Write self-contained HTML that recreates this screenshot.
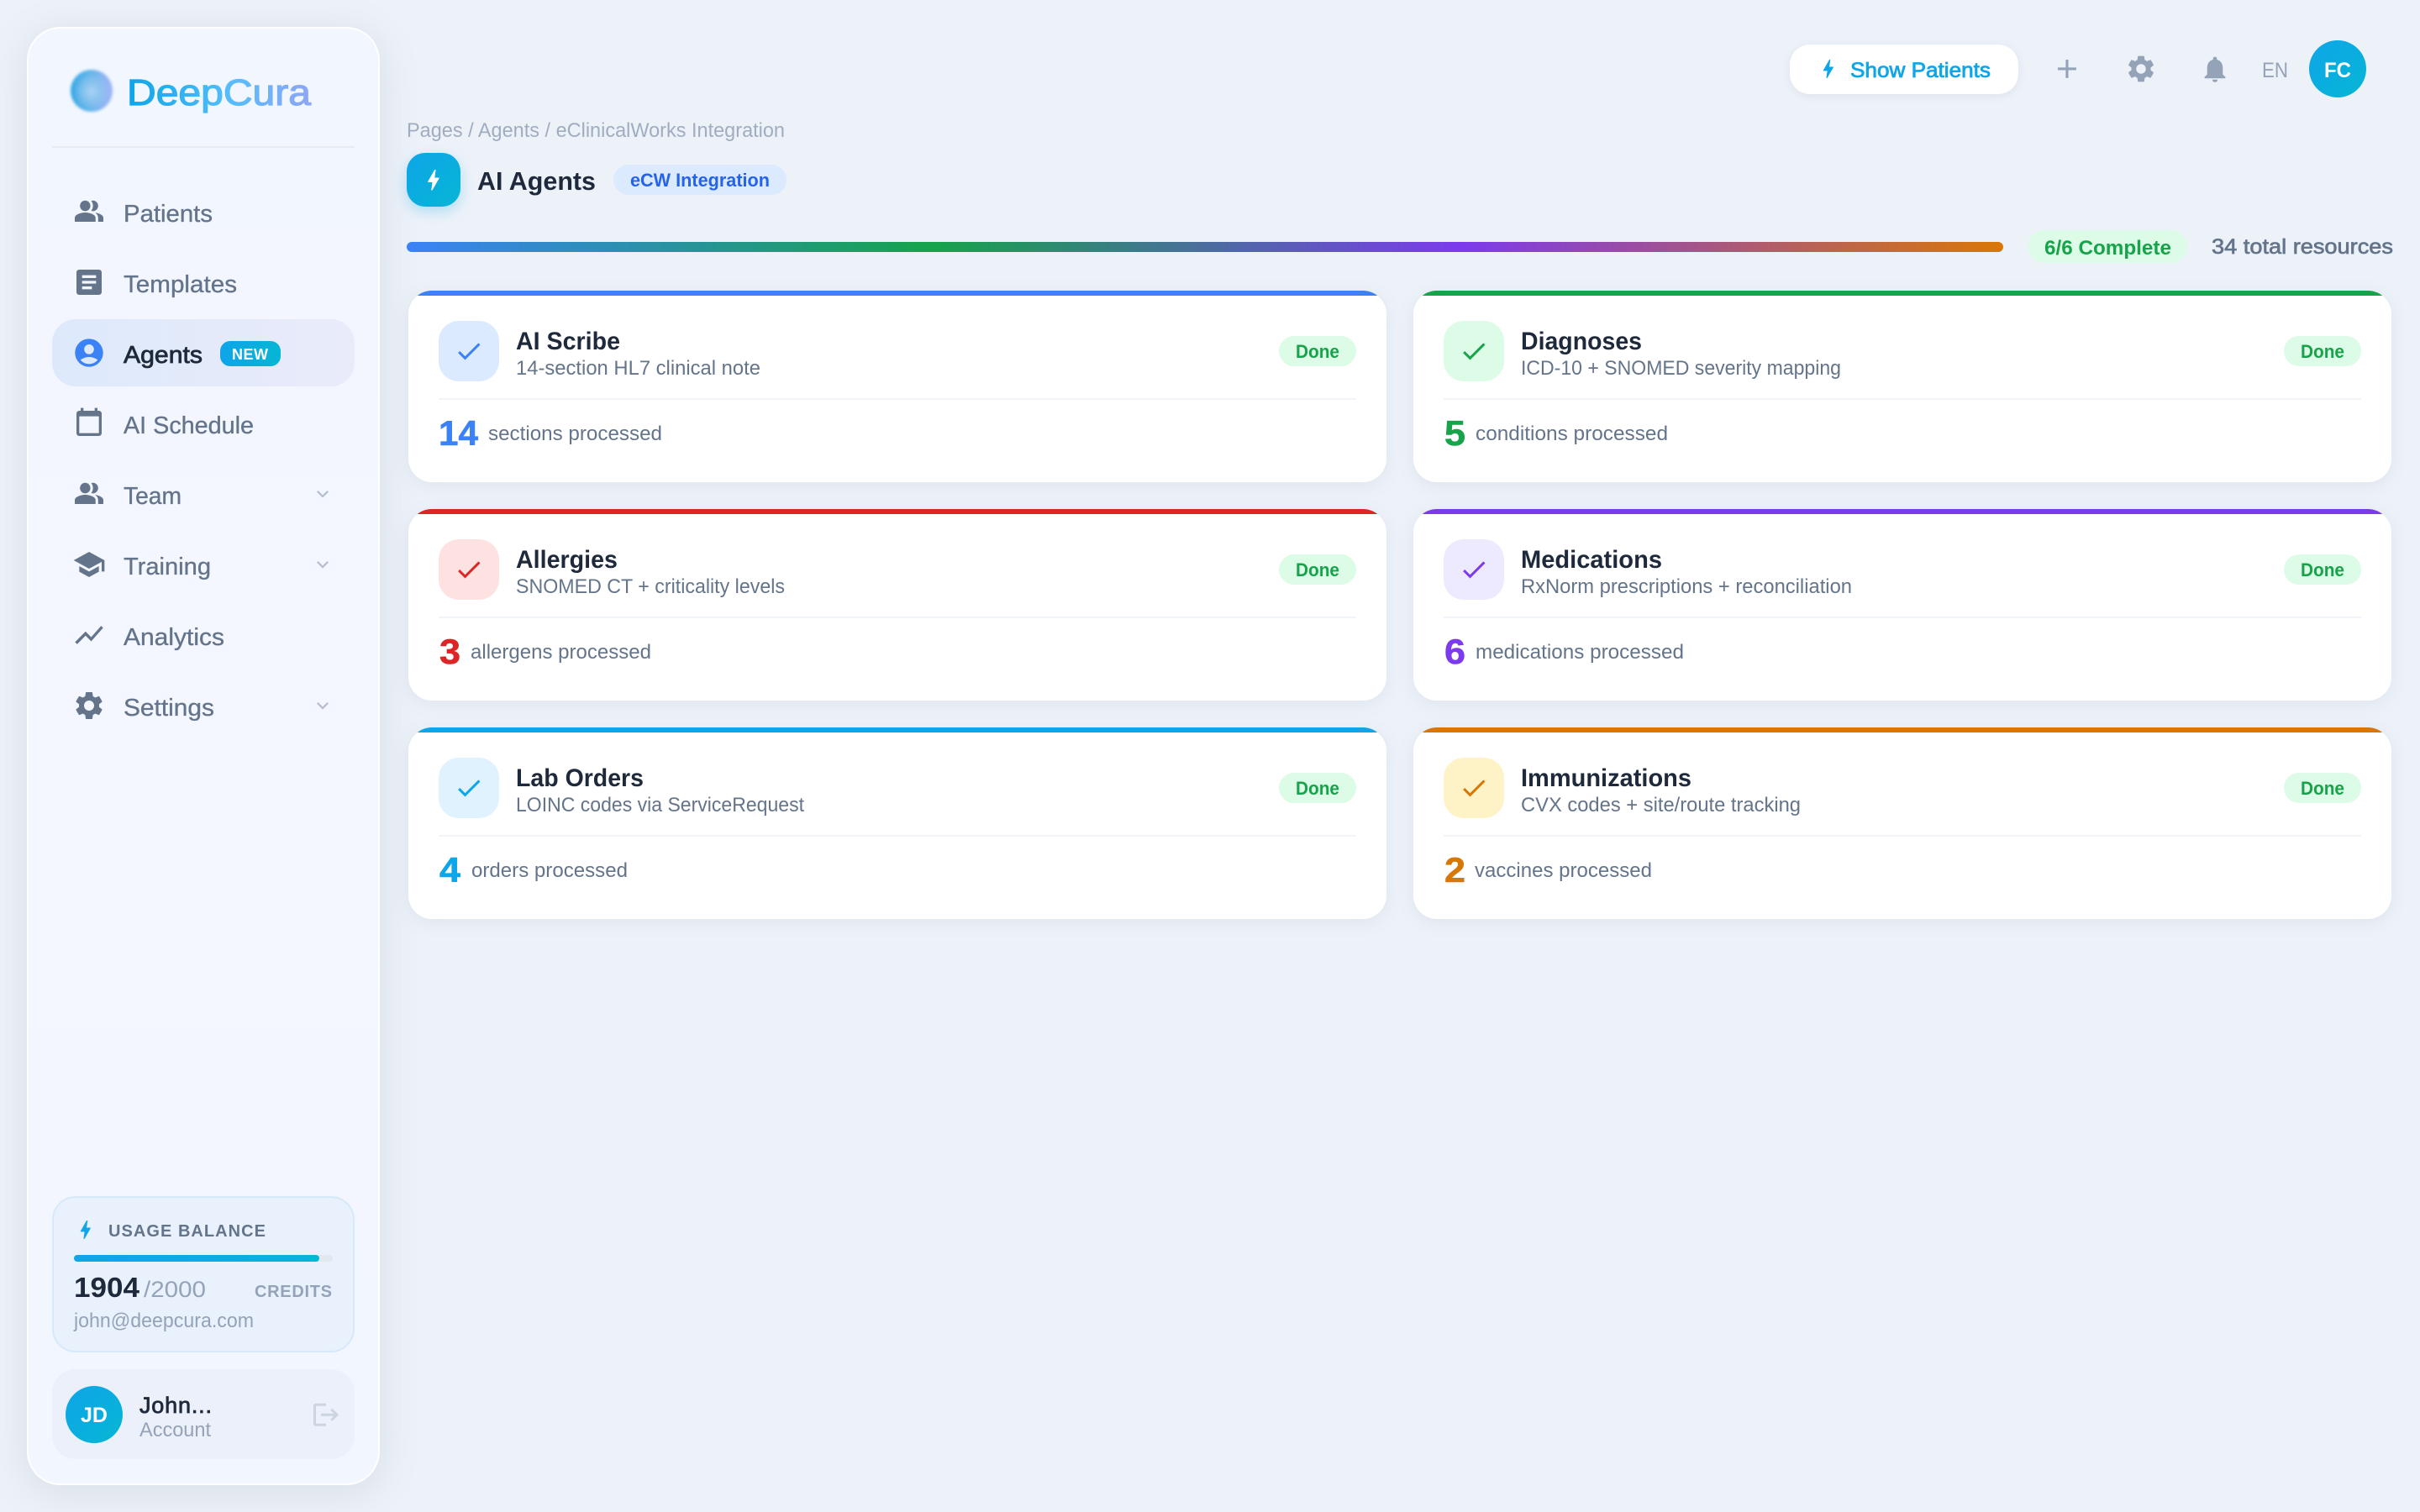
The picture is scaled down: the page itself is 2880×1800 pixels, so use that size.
<!DOCTYPE html>
<html lang="en"><head><meta charset="utf-8"><title>AI Agents - DeepCura</title>
<style>
html,body{margin:0;padding:0;width:2880px;height:1800px;overflow:hidden;background:#edf2f9;font-family:"Liberation Sans",sans-serif}
div{position:absolute;box-sizing:border-box}
svg{position:absolute;left:0;top:0}
text{font-family:"Liberation Sans",sans-serif}
.b{font-weight:700}
.card{width:1164px;height:228px;border-radius:28px;background:#fff;overflow:hidden;box-shadow:0 4px 20px rgba(100,116,139,.1)}
.card i{display:block;height:6px}
.card b{position:absolute;left:36px;top:36px;width:72px;height:72px;border-radius:24px}
.card u{position:absolute;left:36px;right:36px;top:128px;height:2px;background:#f1f5f9}
.card s{position:absolute;right:36px;top:54px;width:92px;height:36px;border-radius:18px;background:#dcfce7}
</style></head><body>
<div style="left:32px;top:32px;width:420px;height:1736px;border-radius:40px;background:linear-gradient(180deg,#f2f6fe,#f4f7ff 50%,#f2f6fe);border:2px solid rgba(255,255,255,.9);box-shadow:0 8px 48px rgba(100,116,139,.16)"></div>
<div style="left:84px;top:83px;width:50px;height:50px;border-radius:50%;background:radial-gradient(circle at 50% 52%,rgba(172,212,244,.95) 0%,rgba(150,200,240,.7) 30%,rgba(150,200,240,0) 62%),linear-gradient(90deg,#35a7e5,#62b6ea 45%,#a3b4f7);filter:blur(1.5px)"></div>
<div style="left:62px;top:174px;width:360px;height:2px;background:#e6ebf3"></div>
<div style="left:62px;top:380px;width:360px;height:80px;border-radius:28px;background:linear-gradient(90deg,#dde9fb,#e9ebfa)"></div>
<div style="left:262px;top:406px;width:72px;height:30px;border-radius:12px;background:linear-gradient(90deg,#0ea5e9,#06b6d4)"></div>
<div style="left:62px;top:1424px;width:360px;height:186px;border-radius:28px;background:#e8f1fc;border:2px solid #d6e9fb"></div>
<div style="left:88px;top:1494px;width:308px;height:8px;border-radius:4px;background:#e2e8f0"></div>
<div style="left:88px;top:1494px;width:292px;height:8px;border-radius:4px;background:linear-gradient(90deg,#0ea5e9,#06b6d4)"></div>
<div style="left:62px;top:1630px;width:360px;height:107px;border-radius:28px;background:#ebf0fa"></div>
<div style="left:78px;top:1650px;width:68px;height:68px;border-radius:50%;background:linear-gradient(135deg,#0ea5e9,#06b6d4)"></div>

<div style="left:2130px;top:53px;width:272px;height:59px;border-radius:24px;background:#fff;box-shadow:0 2px 10px rgba(100,116,139,.12)"></div>
<div style="left:2748px;top:48px;width:68px;height:68px;border-radius:50%;background:linear-gradient(135deg,#0ea5e9,#06b6d4)"></div>
<div style="left:484px;top:182px;width:64px;height:64px;border-radius:22px;background:linear-gradient(135deg,#0ea5e9,#06b6d4);box-shadow:0 6px 16px rgba(14,165,233,.28)"></div>
<div style="left:730px;top:196px;width:206px;height:36px;border-radius:18px;background:#dbeafe"></div>
<div style="left:484px;top:288px;width:1900px;height:12px;border-radius:6px;background:linear-gradient(90deg,#3b82f6,#16a34a 33%,#7c3aed 66%,#d97706)"></div>
<div style="left:2413px;top:274px;width:190px;height:39px;border-radius:20px;background:#dcfce7"></div>

<div class="card" style="left:486px;top:346px"><i style="background:#3b82f6"></i><b style="background:#dbeafe"></b><u></u><s></s></div>
<div class="card" style="left:1682px;top:346px"><i style="background:#16a34a"></i><b style="background:#dcfce7"></b><u></u><s></s></div>
<div class="card" style="left:486px;top:606px"><i style="background:#dc2626"></i><b style="background:#fee2e2"></b><u></u><s></s></div>
<div class="card" style="left:1682px;top:606px"><i style="background:#7c3aed"></i><b style="background:#ede9fe"></b><u></u><s></s></div>
<div class="card" style="left:486px;top:866px"><i style="background:#0ea5e9"></i><b style="background:#e0f2fe"></b><u></u><s></s></div>
<div class="card" style="left:1682px;top:866px"><i style="background:#d97706"></i><b style="background:#fef3c7"></b><u></u><s></s></div>

<svg width="2880" height="1800" viewBox="0 0 2880 1800" xmlns="http://www.w3.org/2000/svg">
<defs><linearGradient id="lg" gradientUnits="userSpaceOnUse" x1="153" y1="0" x2="370" y2="0"><stop offset="0" stop-color="#0ea5e9"/><stop offset=".55" stop-color="#55bdfa"/><stop offset="1" stop-color="#8ea6f6"/></linearGradient></defs>

<!-- sidebar -->
<text x="151" y="125" font-size="44" textLength="219" lengthAdjust="spacingAndGlyphs" fill="url(#lg)" stroke="url(#lg)" stroke-width="1.2">DeepCura</text>

<g fill="#64748b">
<g transform="translate(87.45,232.4) scale(1.545,1.58)"><circle cx="9" cy="8" r="4"/><path d="M16.67 13.13C18.04 14.06 19 15.32 19 17v3h4v-3c0-2.18-3.57-3.47-6.33-3.87z"/><path d="M15 12c2.21 0 4-1.79 4-4s-1.79-4-4-4c-.47 0-.91.1-1.33.24C14.5 5.27 15 6.58 15 8s-.5 2.73-1.33 3.76c.42.14.86.24 1.33.24z"/><path d="M9 13c-2.67 0-8 1.34-8 4v3h16v-3c0-2.66-5.33-4-8-4z"/></g>
<path transform="translate(86,316) scale(1.667)" d="M19 3H5c-1.1 0-2 .9-2 2v14c0 1.1.9 2 2 2h14c1.1 0 2-.9 2-2V5c0-1.1-.9-2-2-2zm-5 14H7v-2h7v2zm3-4H7v-2h10v2zm0-4H7V7h10v2z"/>
<path transform="translate(86,484) scale(1.667)" d="M19 3h-1V1h-2v2H8V1H6v2H5c-1.11 0-1.99.9-1.99 2L3 19c0 1.1.89 2 2 2h14c1.1 0 2-.9 2-2V5c0-1.1-.9-2-2-2zm0 16H5V7h14v12z"/>
<g transform="translate(87.45,568.4) scale(1.545,1.58)"><circle cx="9" cy="8" r="4"/><path d="M16.67 13.13C18.04 14.06 19 15.32 19 17v3h4v-3c0-2.18-3.57-3.47-6.33-3.87z"/><path d="M15 12c2.21 0 4-1.79 4-4s-1.79-4-4-4c-.47 0-.91.1-1.33.24C14.5 5.27 15 6.58 15 8s-.5 2.73-1.33 3.76c.42.14.86.24 1.33.24z"/><path d="M9 13c-2.67 0-8 1.34-8 4v3h16v-3c0-2.66-5.33-4-8-4z"/></g>
<path transform="translate(86,652) scale(1.667)" d="M5 13.18v4L12 21l7-3.82v-4L12 17l-7-3.82zM12 3 1 9l11 6 9-4.91V17h2V9L12 3z"/>
<path transform="translate(86,736) scale(1.667)" d="M3.5 18.49l6-6.01 4 4L22 6.92l-1.41-1.41-7.09 7.97-4-4L2 16.99z"/>
<path transform="translate(86,820) scale(1.667)" d="M19.14,12.94c0.04-0.3,0.06-0.61,0.06-0.94c0-0.32-0.02-0.64-0.07-0.94l2.03-1.58c0.18-0.14,0.23-0.41,0.12-0.61l-1.92-3.32c-0.12-0.22-0.37-0.29-0.59-0.22l-2.39,0.96c-0.5-0.38-1.03-0.7-1.62-0.94L14.4,2.81c-0.04-0.24-0.24-0.41-0.48-0.41h-3.84c-0.24,0-0.43,0.17-0.47,0.41L9.25,5.35C8.66,5.59,8.12,5.92,7.63,6.29L5.24,5.33c-0.22-0.08-0.47,0-0.59,0.22L2.74,8.87C2.62,9.08,2.66,9.34,2.86,9.48l2.03,1.58C4.84,11.36,4.8,11.69,4.8,12s0.02,0.64,0.07,0.94l-2.03,1.58c-0.18,0.14-0.23,0.41-0.12,0.61l1.92,3.32c0.12,0.22,0.37,0.29,0.59,0.22l2.39-0.96c0.5,0.38,1.03,0.7,1.62,0.94l0.36,2.54c0.05,0.24,0.24,0.41,0.48,0.41h3.84c0.24,0,0.44-0.17,0.47-0.41l0.36-2.54c0.59-0.24,1.13-0.56,1.62-0.94l2.39,0.96c0.22,0.08,0.47,0,0.59-0.22l1.92-3.32c0.12-0.22,0.07-0.47-0.12-0.61L19.14,12.94z M12,15.6c-1.98,0-3.6-1.62-3.6-3.6s1.62-3.6,3.6-3.6s3.6,1.62,3.6,3.6S13.98,15.6,12,15.6z"/>
</g>
<path fill="#3b82f6" transform="translate(86,400) scale(1.667)" d="M12 2C6.48 2 2 6.48 2 12s4.48 10 10 10 10-4.48 10-10S17.52 2 12 2zm0 4c1.93 0 3.5 1.57 3.5 3.5S13.93 13 12 13s-3.5-1.57-3.5-3.5S10.07 6 12 6zm0 14c-2.03 0-4.43-.82-6.14-2.88C7.55 15.8 9.68 15 12 15s4.45.8 6.14 2.12C16.43 19.18 14.03 20 12 20z"/>
<g fill="#b6bfcd">
<path transform="translate(370,574) scale(1.167)" d="M16.59 8.59 12 13.17 7.41 8.59 6 10l6 6 6-6z"/>
<path transform="translate(370,658) scale(1.167)" d="M16.59 8.59 12 13.17 7.41 8.59 6 10l6 6 6-6z"/>
<path transform="translate(370,826) scale(1.167)" d="M16.59 8.59 12 13.17 7.41 8.59 6 10l6 6 6-6z"/>
</g>

<g font-size="29" fill="#64748b" stroke="#64748b" stroke-width=".35">
<text x="147" y="264" textLength="106" lengthAdjust="spacingAndGlyphs">Patients</text>
<text x="147" y="348" textLength="135" lengthAdjust="spacingAndGlyphs">Templates</text>
<text x="147" y="516" textLength="155" lengthAdjust="spacingAndGlyphs">AI Schedule</text>
<text x="147" y="600" textLength="69" lengthAdjust="spacingAndGlyphs">Team</text>
<text x="147" y="684" textLength="104" lengthAdjust="spacingAndGlyphs">Training</text>
<text x="147" y="768" textLength="120" lengthAdjust="spacingAndGlyphs">Analytics</text>
<text x="147" y="852" textLength="108" lengthAdjust="spacingAndGlyphs">Settings</text>
</g>
<text x="147" y="432" font-size="29" fill="#1e293b" stroke="#1e293b" stroke-width=".8" textLength="94" lengthAdjust="spacingAndGlyphs">Agents</text>
<text class="b" x="276" y="428" font-size="18" fill="#fff" textLength="43" lengthAdjust="spacing">NEW</text>

<!-- usage -->
<path fill="#0ea5e9" transform="translate(87.2,1449.3) scale(1.22)" d="M11 21h-1l1-7H7.5c-.58 0-.57-.32-.38-.66.19-.34.05-.08.07-.12C8.48 10.94 10.42 7.54 13 3h1l-1 7h3.5c.49 0 .56.33.47.51l-.07.15C12.96 17.55 11 21 11 21z"/>
<text class="b" x="129" y="1472" font-size="20" fill="#64748b" textLength="187" lengthAdjust="spacing">USAGE BALANCE</text>
<text class="b" x="88" y="1544" font-size="33" fill="#1e293b" textLength="78" lengthAdjust="spacingAndGlyphs">1904</text>
<text x="171" y="1544" font-size="27" fill="#94a3b8" textLength="74" lengthAdjust="spacingAndGlyphs">/2000</text>
<text class="b" x="303" y="1544" font-size="20" fill="#94a3b8" textLength="92" lengthAdjust="spacing">CREDITS</text>
<text x="88" y="1580" font-size="24" fill="#94a3b8" textLength="214" lengthAdjust="spacingAndGlyphs">john@deepcura.com</text>
<text class="b" x="96" y="1693" font-size="25" fill="#fff" textLength="32" lengthAdjust="spacingAndGlyphs">JD</text>
<text x="166" y="1682" font-size="27" fill="#1e293b" stroke="#1e293b" stroke-width=".8" textLength="86" lengthAdjust="spacing">John...</text>
<text x="166" y="1710" font-size="24" fill="#94a3b8" textLength="85" lengthAdjust="spacingAndGlyphs">Account</text>
<path fill="#cbd5e1" transform="translate(370,1666.2) scale(1.5)" d="M17 7l-1.41 1.41L18.17 11H8v2h10.17l-2.58 2.58L17 17l5-5zM4 5h8V3H4c-1.1 0-2 .9-2 2v14c0 1.1.9 2 2 2h8v-2H4V5z"/>

<!-- top bar -->
<path fill="#0ea5e9" transform="translate(2161.2,67.3) scale(1.22)" d="M11 21h-1l1-7H7.5c-.58 0-.57-.32-.38-.66.19-.34.05-.08.07-.12C8.48 10.94 10.42 7.54 13 3h1l-1 7h3.5c.49 0 .56.33.47.51l-.07.15C12.96 17.55 11 21 11 21z"/>
<text x="2202" y="92" font-size="25" fill="#0ea5e9" stroke="#0ea5e9" stroke-width=".8" textLength="167" lengthAdjust="spacingAndGlyphs">Show Patients</text>
<path fill="#94a3b8" transform="translate(2441.1,63.1) scale(1.57)" d="M19 13h-6v6h-2v-6H5v-2h6V5h2v6h6v2z"/>
<path fill="#94a3b8" transform="translate(2528.8,62.8) scale(1.6)" d="M19.14,12.94c0.04-0.3,0.06-0.61,0.06-0.94c0-0.32-0.02-0.64-0.07-0.94l2.03-1.58c0.18-0.14,0.23-0.41,0.12-0.61l-1.92-3.32c-0.12-0.22-0.37-0.29-0.59-0.22l-2.39,0.96c-0.5-0.38-1.03-0.7-1.62-0.94L14.4,2.81c-0.04-0.24-0.24-0.41-0.48-0.41h-3.84c-0.24,0-0.43,0.17-0.47,0.41L9.25,5.35C8.66,5.59,8.12,5.92,7.63,6.29L5.24,5.33c-0.22-0.08-0.47,0-0.59,0.22L2.74,8.87C2.62,9.08,2.66,9.34,2.86,9.48l2.03,1.58C4.84,11.36,4.8,11.69,4.8,12s0.02,0.64,0.07,0.94l-2.03,1.58c-0.18,0.14-0.23,0.41-0.12,0.61l1.92,3.32c0.12,0.22,0.37,0.29,0.59,0.22l2.39-0.96c0.5,0.38,1.03,0.7,1.62,0.94l0.36,2.54c0.05,0.24,0.24,0.41,0.48,0.41h3.84c0.24,0,0.44-0.17,0.47-0.41l0.36-2.54c0.59-0.24,1.13-0.56,1.62-0.94l2.39,0.96c0.22,0.08,0.47,0,0.59-0.22l1.92-3.32c0.12-0.22,0.07-0.47-0.12-0.61L19.14,12.94z M12,15.6c-1.98,0-3.6-1.62-3.6-3.6s1.62-3.6,3.6-3.6s3.6,1.62,3.6,3.6S13.98,15.6,12,15.6z"/>
<path fill="#94a3b8" transform="translate(2617.4,63.8) scale(1.55)" d="M12 22c1.1 0 2-.9 2-2h-4c0 1.1.9 2 2 2zm6-6v-5c0-3.07-1.63-5.64-4.5-6.32V4c0-.83-.67-1.5-1.5-1.5s-1.5.67-1.5 1.5v.68C7.64 5.36 6 7.92 6 11v5l-2 2v1h16v-1l-2-2z"/>
<text x="2692" y="92" font-size="25" fill="#94a3b8" textLength="31" lengthAdjust="spacingAndGlyphs">EN</text>
<text class="b" x="2766" y="92" font-size="25" fill="#fff" textLength="32" lengthAdjust="spacingAndGlyphs">FC</text>

<!-- header -->
<text x="484" y="163" font-size="24" fill="#a0adc0" textLength="450" lengthAdjust="spacingAndGlyphs">Pages / Agents / eClinicalWorks Integration</text>
<path fill="#fff" transform="translate(499.6,197.9) scale(1.36)" d="M11 21h-1l1-7H7.5c-.58 0-.57-.32-.38-.66.19-.34.05-.08.07-.12C8.48 10.94 10.42 7.54 13 3h1l-1 7h3.5c.49 0 .56.33.47.51l-.07.15C12.96 17.55 11 21 11 21z"/>
<text class="b" x="568" y="226" font-size="31" fill="#1e293b" textLength="141" lengthAdjust="spacingAndGlyphs">AI Agents</text>
<text class="b" x="750" y="222" font-size="22" fill="#2563eb" textLength="166" lengthAdjust="spacingAndGlyphs">eCW Integration</text>
<text class="b" x="2433" y="303" font-size="24" fill="#16a34a" textLength="151" lengthAdjust="spacingAndGlyphs">6/6 Complete</text>
<text x="2632" y="302" font-size="25" fill="#64748b" stroke="#64748b" stroke-width=".7" textLength="216" lengthAdjust="spacingAndGlyphs">34 total resources</text>

<!-- checks -->
<path fill="#3b82f6" transform="translate(540,400) scale(1.5)" d="M9 16.17 4.83 12l-1.42 1.41L9 19 21 7l-1.41-1.41z"/>
<path fill="#16a34a" transform="translate(1736,400) scale(1.5)" d="M9 16.17 4.83 12l-1.42 1.41L9 19 21 7l-1.41-1.41z"/>
<path fill="#dc2626" transform="translate(540,660) scale(1.5)" d="M9 16.17 4.83 12l-1.42 1.41L9 19 21 7l-1.41-1.41z"/>
<path fill="#7c3aed" transform="translate(1736,660) scale(1.5)" d="M9 16.17 4.83 12l-1.42 1.41L9 19 21 7l-1.41-1.41z"/>
<path fill="#0ea5e9" transform="translate(540,920) scale(1.5)" d="M9 16.17 4.83 12l-1.42 1.41L9 19 21 7l-1.41-1.41z"/>
<path fill="#d97706" transform="translate(1736,920) scale(1.5)" d="M9 16.17 4.83 12l-1.42 1.41L9 19 21 7l-1.41-1.41z"/>

<!-- titles -->
<g class="b" font-size="30" fill="#1e293b" font-weight="700">
<text x="614" y="416" textLength="124" lengthAdjust="spacingAndGlyphs">AI Scribe</text>
<text x="1810" y="416" textLength="144" lengthAdjust="spacingAndGlyphs">Diagnoses</text>
<text x="614" y="676" textLength="121" lengthAdjust="spacingAndGlyphs">Allergies</text>
<text x="1810" y="676" textLength="168" lengthAdjust="spacingAndGlyphs">Medications</text>
<text x="614" y="936" textLength="152" lengthAdjust="spacingAndGlyphs">Lab Orders</text>
<text x="1810" y="936" textLength="203" lengthAdjust="spacingAndGlyphs">Immunizations</text>
</g>
<!-- subtitles -->
<g font-size="24" fill="#64748b">
<text x="614" y="446" textLength="291" lengthAdjust="spacingAndGlyphs">14-section HL7 clinical note</text>
<text x="1810" y="446" textLength="381" lengthAdjust="spacingAndGlyphs">ICD-10 + SNOMED severity mapping</text>
<text x="614" y="706" textLength="320" lengthAdjust="spacingAndGlyphs">SNOMED CT + criticality levels</text>
<text x="1810" y="706" textLength="394" lengthAdjust="spacingAndGlyphs">RxNorm prescriptions + reconciliation</text>
<text x="614" y="966" textLength="343" lengthAdjust="spacingAndGlyphs">LOINC codes via ServiceRequest</text>
<text x="1810" y="966" textLength="333" lengthAdjust="spacingAndGlyphs">CVX codes + site/route tracking</text>
<text x="581" y="524" textLength="207" lengthAdjust="spacingAndGlyphs">sections processed</text>
<text x="1756" y="524" textLength="229" lengthAdjust="spacingAndGlyphs">conditions processed</text>
<text x="560" y="784" textLength="215" lengthAdjust="spacingAndGlyphs">allergens processed</text>
<text x="1756" y="784" textLength="248" lengthAdjust="spacingAndGlyphs">medications processed</text>
<text x="561" y="1044" textLength="186" lengthAdjust="spacingAndGlyphs">orders processed</text>
<text x="1755" y="1044" textLength="211" lengthAdjust="spacingAndGlyphs">vaccines processed</text>
</g>
<!-- numbers -->
<g font-size="42" font-weight="700" stroke-width=".6">
<text x="522" y="530" fill="#3b82f6" stroke="#3b82f6" textLength="47" lengthAdjust="spacingAndGlyphs">14</text>
<text x="523" y="790" fill="#dc2626" stroke="#dc2626" textLength="25" lengthAdjust="spacingAndGlyphs">3</text>
<text x="523" y="1050" fill="#0ea5e9" stroke="#0ea5e9" textLength="25" lengthAdjust="spacingAndGlyphs">4</text>
<text x="1719" y="530" fill="#16a34a" stroke="#16a34a" textLength="25" lengthAdjust="spacingAndGlyphs">5</text>
<text x="1719" y="790" fill="#7c3aed" stroke="#7c3aed" textLength="25" lengthAdjust="spacingAndGlyphs">6</text>
<text x="1719" y="1050" fill="#d97706" stroke="#d97706" textLength="25" lengthAdjust="spacingAndGlyphs">2</text>
</g>
<!-- done -->
<g font-size="22" font-weight="700" fill="#16a34a">
<text x="1542" y="426" textLength="52" lengthAdjust="spacingAndGlyphs">Done</text>
<text x="2738" y="426" textLength="52" lengthAdjust="spacingAndGlyphs">Done</text>
<text x="1542" y="686" textLength="52" lengthAdjust="spacingAndGlyphs">Done</text>
<text x="2738" y="686" textLength="52" lengthAdjust="spacingAndGlyphs">Done</text>
<text x="1542" y="946" textLength="52" lengthAdjust="spacingAndGlyphs">Done</text>
<text x="2738" y="946" textLength="52" lengthAdjust="spacingAndGlyphs">Done</text>
</g>
</svg>
</body></html>
